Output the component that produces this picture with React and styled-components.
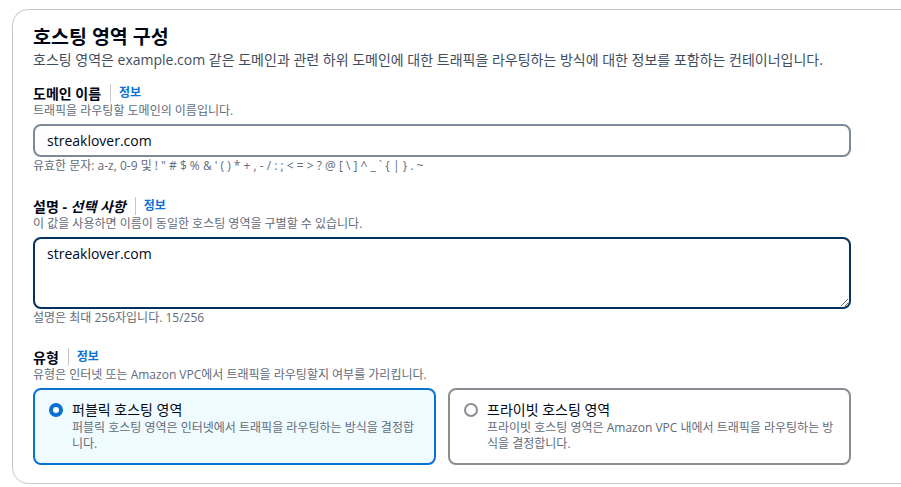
import React from 'react'
import styled, { createGlobalStyle } from 'styled-components'

const Global = createGlobalStyle`
  body {
    margin: 0;
    background: #fff;
    overflow: hidden;
    font-family: "Open Sans", "Noto Sans CJK KR", sans-serif;
    color: #000716;
  }
`

const Page = styled.div`
  padding: 9px 0 0 12px;
`

const Card = styled.section`
  width: 940px;
  box-sizing: border-box;
  border: 1px solid #c6c6cd;
  border-radius: 16px;
  padding: 14px 20px 20px 20px;
  height: 475px;
`

const Title = styled.h2`
  margin: 0;
  font-size: 19.5px;
  line-height: 26px;
  font-weight: 700;
  color: #000716;
`

const Lead = styled.p`
  margin: 0 0 13px;
  font-size: 14px;
  line-height: 20px;
  color: #414d5c;
`

const Field = styled.div`
  display: flex;
  flex-direction: column;
  margin-top: ${p => p.$top || 0}px;
`

const LabelRow = styled.div`
  display: flex;
  align-items: center;
  height: 20px;
`

const Label = styled.label`
  font-size: 14px;
  font-weight: 700;
  color: #000716;
  em {
    font-style: italic;
  }
`

const Info = styled.a`
  margin-left: 9px;
  padding-left: 8px;
  border-left: 1px solid #c6c6cd;
  line-height: 18px;
  font-size: 12px;
  font-weight: 700;
  color: #0972d3;
  text-decoration: none;
`

const Hint = styled.div`
  font-size: 12px;
  line-height: 16px;
  color: #5f6b7a;
`

const Input = styled.input`
  box-sizing: border-box;
  width: 818px;
  height: 33px;
  margin-top: 5px;
  padding: 0 12px;
  border: 2px solid #7d8998;
  border-radius: 8px;
  font-family: inherit;
  font-size: 14px;
  color: #000716;
  outline: none;
`

const TextArea = styled.textarea`
  box-sizing: border-box;
  width: 818px;
  height: 72px;
  margin-top: 5px;
  padding: 5px 12px;
  border: 2px solid #033160;
  border-radius: 8px;
  font-family: inherit;
  font-size: 14px;
  line-height: 20px;
  color: #000716;
  outline: none;
`

const Below = styled(Hint)`
  margin-top: 1px;
`

const Tiles = styled.div`
  display: grid;
  grid-template-columns: 403px 403px;
  gap: 12px;
  margin-top: 5px;
`

const Tile = styled.label`
  box-sizing: border-box;
  height: 77px;
  display: flex;
  align-items: flex-start;
  gap: 9px;
  padding: 10px 14px;
  border: 2px solid ${p => (p.$checked ? '#0972d3' : '#8c8c94')};
  background: ${p => (p.$checked ? '#f0fbff' : '#fff')};
  border-radius: 8px;
`

const Dot = styled.span`
  flex: none;
  box-sizing: border-box;
  width: 14px;
  height: 14px;
  margin-top: 3px;
  border-radius: 50%;
  border: ${p => (p.$checked ? '4px solid #0972d3' : '2px solid #8c8c94')};
  background: #fff;
`

const TileText = styled.div`
  display: flex;
  flex-direction: column;
`

const TileTitle = styled.span`
  font-size: 14px;
  line-height: 20px;
  color: #000716;
`

const TileDesc = styled.span`
  font-size: 12px;
  line-height: 16px;
  color: #5f6b7a;
`

const FieldLabel = ({ children }) => (
  <LabelRow>
    <Label>{children}</Label>
    <Info href="#">정보</Info>
  </LabelRow>
)

export default function App() {
  return (
    <Page>
      <Global />
      <Card>
        <Title>호스팅 영역 구성</Title>
        <Lead>호스팅 영역은 example.com 같은 도메인과 관련 하위 도메인에 대한 트래픽을 라우팅하는 방식에 대한 정보를 포함하는 컨테이너입니다.</Lead>

        <Field>
          <FieldLabel>도메인 이름</FieldLabel>
          <Hint>트래픽을 라우팅할 도메인의 이름입니다.</Hint>
          <Input defaultValue="streaklover.com" />
          <Below>유효한 문자: a-z, 0-9 및 ! " # $ % &amp; ' ( ) * + , - / : ; &lt; = &gt; ? @ [ \ ] ^ _ ` {'{'} | {'}'} . ~</Below>
        </Field>

        <Field $top={22}>
          <FieldLabel>설명 - <em>선택 사항</em></FieldLabel>
          <Hint>이 값을 사용하면 이름이 동일한 호스팅 영역을 구별할 수 있습니다.</Hint>
          <TextArea defaultValue="streaklover.com" />
          <Below>설명은 최대 256자입니다. 15/256</Below>
        </Field>

        <Field $top={21}>
          <FieldLabel>유형</FieldLabel>
          <Hint>유형은 인터넷 또는 Amazon VPC에서 트래픽을 라우팅할지 여부를 가리킵니다.</Hint>
          <Tiles>
            <Tile $checked>
              <Dot $checked />
              <TileText>
                <TileTitle>퍼블릭 호스팅 영역</TileTitle>
                <TileDesc>퍼블릭 호스팅 영역은 인터넷에서 트래픽을 라우팅하는 방식을 결정합니다.</TileDesc>
              </TileText>
            </Tile>
            <Tile>
              <Dot />
              <TileText>
                <TileTitle>프라이빗 호스팅 영역</TileTitle>
                <TileDesc>프라이빗 호스팅 영역은 Amazon VPC 내에서 트래픽을 라우팅하는 방식을 결정합니다.</TileDesc>
              </TileText>
            </Tile>
          </Tiles>
        </Field>
      </Card>
    </Page>
  )
}
